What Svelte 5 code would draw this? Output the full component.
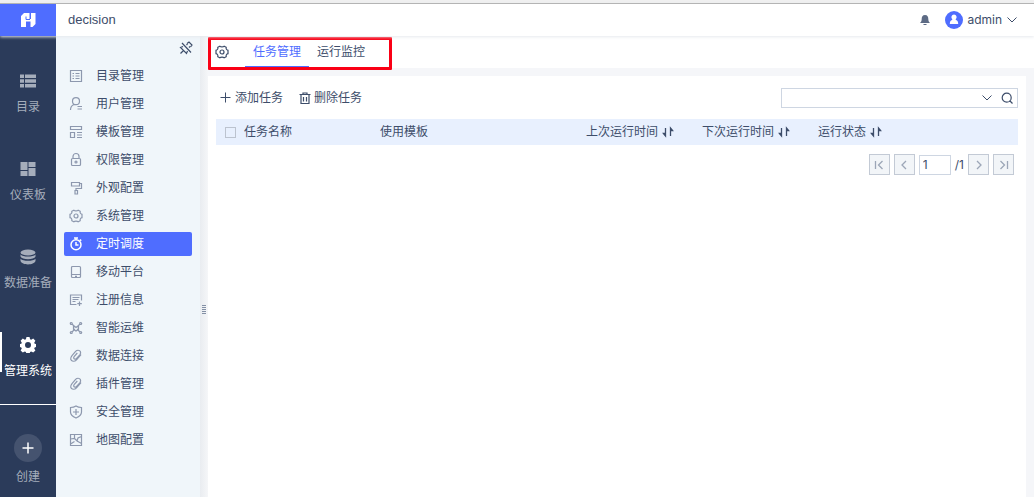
<script lang="ts">
  let activeModule = $state('管理系统');
  let activeMenu = $state('定时调度');
  let activeTab = $state('任务管理');
  let keyword = $state('');
  let page = $state('1');

  const gear =
    'M5.8 2.2 C6.6 3.2 9.400 3.2 10.200 2.2 L12.200 3.300 C11.800 4.800 12.600 6 14 6.300 V9.700 C12.600 10 11.800 11.200 12.200 12.700 L10.200 13.800 C9.400 12.800 6.600 12.800 5.800 13.800 L3.800 12.700 C4.200 11.200 3.400 10 2 9.700 V6.300 C3.400 6 4.200 4.800 3.800 3.300z M10 8a2 2 0 1 1-4 0a2 2 0 1 1 4 0';
  const clip =
    'M13 6.5 L8.5 11.8 C6.5 14 3.2 13.6 2.7 11.2 C2.4 9.8 3 8.8 4 7.6 L7.6 3.4 C9 1.8 11.4 1.9 12.3 3.4 C13 4.6 12.6 5.8 11.8 6.8 L8.6 10.4 C7.6 11.5 6 11.3 5.7 10.2 C5.5 9.4 5.8 8.9 6.3 8.3 L9.3 5';

  const modules = [
    { name: '目录', icon: 'M0 1.5h4v3.5h-4z M5 1.5h11v3.5h-11z M0 6.3h4v3.5h-4z M5 6.3h11v3.5h-11z M0 11.1h4v3.5h-4z M5 11.1h11v3.5h-11z' },
    { name: '仪表板', icon: 'M.5 1h7v8h-7z M8.5 1h7v5h-7z M.5 10h7v5h-7z M8.5 7h7v8h-7z' },
    { name: '数据准备', icon: 'M.5 3.5 A7.5 3 0 0 1 15.5 3.5 A7.5 3 0 0 1 .5 3.5z M.5 5.5 C3 8.2 13 8.2 15.5 5.5 V7.5 C14 11 2 11 .5 7.5z M.5 9.8 C3 12.5 13 12.5 15.5 9.8 V12 C14 16.5 2 16.5 .5 12z' },
    { name: '管理系统', icon: 'M6.5 0h3l.6 2.200 1.100.5 2-1.200 2.200 2.200-1.200 2 .5 1 2.200.6v2.400l-2.200.7-.5 1 1.200 2-2.200 2.200-2-1.200-1.100.5-.6 2.200h-3l-.6-2.200-1.100-.5-2 1.200-2.200-2.200 1.200-2-.5-1-2.200-.7v-2.400l2.200-.6.5-1-1.200-2 2.200-2.200 2 1.200 1.100-.5z M8 5a3 3 0 1 0 0 6a3 3 0 1 0 0-6z' },
  ];

  const menus = [
    { name: '目录管理', icon: 'M2.5 2.5h11v11h-11z M4.5 5.5h1.500 M7.5 5.5h4 M4.5 8h1.500 M7.5 8h4 M4.5 10.5h1.500 M7.5 10.5h4' },
    { name: '用户管理', icon: 'M11.5 5.2a3.500 3.500 0 1 1-7 0a3.500 3.500 0 1 1 7 0 M6 8.500 C3.5 9.500 2.500 11.500 2.500 14 M9.500 10.500h4.500 M9.500 13h4.500' },
    { name: '模板管理', icon: 'M2.500 2.500h11v3h-11z M2.500 8.500h4v5h-4z M9 8.500h5 M9 11h5 M9 13.500h5' },
    { name: '权限管理', icon: 'M5 7V4.500a3 3 0 0 1 6 0V7 M4.500 6.500h7a1 1 0 0 1 1 1v5a1 1 0 0 1-1 1h-7a1 1 0 0 1-1-1v-5a1 1 0 0 1 1-1z M9 10a1 1 0 1 1-2 0a1 1 0 1 1 2 0' },
    { name: '外观配置', icon: 'M3.500 2.500h8v3.500h-8z M11.500 3.500h2v5h-5.500v2 M7 10.500h2.500v3.500h-2.500z' },
    { name: '系统管理', icon: gear },
    { name: '定时调度', icon: 'M13 8.800a5 5 0 1 1-10 0a5 5 0 1 1 10 0 M6 2h4 M8 2v2 M8 6v3h2.500 M12 3.500l1.200 1.200' },
    { name: '移动平台', icon: 'M4.500 2.500h7a1 1 0 0 1 1 1v9a1 1 0 0 1-1 1h-7a1 1 0 0 1-1-1v-9a1 1 0 0 1 1-1z M3.500 10.500h9 M7 12.300h2' },
    { name: '注册信息', icon: 'M8.500 12.500h-6v-9.500h11v5.500 M4.500 5.500h7 M4.500 7.500h6 M4.500 9.500h3 M11.500 9.500v4.500 M9.300 11.700h4.500' },
    { name: '智能运维', icon: 'M4 4l3 3 M12 4l-3 3 M4 12l3-3 M12 12l-3-3 M4.300 3.500a1 1 0 1 1-2 0a1 1 0 1 1 2 0 M13.700 3.500a1 1 0 1 1-2 0a1 1 0 1 1 2 0 M4.300 12.500a1 1 0 1 1-2 0a1 1 0 1 1 2 0 M13.700 12.500a1 1 0 1 1-2 0a1 1 0 1 1 2 0 M5.500 5.500l2.500 2 2.500-2v4l-2.500 1.500-2.500-1.500z' },
    { name: '数据连接', icon: clip },
    { name: '插件管理', icon: clip },
    { name: '安全管理', icon: 'M8 2 C10 3.300 12 3.500 13.500 3.500 V8 C13.500 11 10.500 13 8 14 C5.500 13 2.500 11 2.500 8 V3.500 C4 3.500 6 3.300 8 2z M8 5v6 M5 8h6' },
    { name: '地图配置', icon: 'M2.500 2.500h11v11h-11z M2.500 7l4-.5 2.500 2.500 1-3 3.500-1.500 M6.500 6.500v-4 M2.500 12l4-2.500 M9 9l4.500 2.500' },
  ];

  const tabs = ['任务管理', '运行监控'];
</script>

{#snippet line(d: string)}
  <svg class="line-icon" viewBox="0 0 16 16" aria-hidden="true"><path {d} /></svg>
{/snippet}

{#snippet sortable(label: string)}
  <button class="sort">
    {label}
    <svg viewBox="0 0 12 12" aria-hidden="true">
      <path d="M3.5 2v8 M1.5 7.5l2 2.5v-2.5z M8.5 10v-8 M10.5 4.5l-2-2.5v2.5z" />
    </svg>
  </button>
{/snippet}

<div class="app">
  <header>
    <a class="logo" href="#home" aria-label="decision">
      <svg viewBox="0 0 16 16" aria-hidden="true">
        <path d="M4 1 H9.500 V7 H11 V4.500 H10.500 V1 H15.500 V12 L12.500 15 H10.500 V9.500 H6 V15 H1 V4z" />
        <path class="cut" d="M6 4.500v3h4 M10.500 1v4" />
      </svg>
    </a>
    <span class="title">decision</span>
    <div class="user">
      <button class="bell" aria-label="消息">
        <svg viewBox="0 0 12 12" aria-hidden="true"><path d="M6 1 C8.500 1 9.300 3 9.300 5 C9.300 7 10 8 11 9 H1 C2 8 2.700 7 2.700 5 C2.700 3 3.500 1 6 1z M4.500 10h3v1h-3z" /></svg>
      </button>
      <button class="account">
        <svg class="avatar" viewBox="0 0 18 18" aria-hidden="true">
          <circle cx="9" cy="9" r="9" />
          <path d="M9 3.500a2.700 2.700 0 0 1 1.600 4.800 L11 9 C12.500 9.500 13.200 10.500 13.200 13 H4.800 C4.800 10.500 5.500 9.500 7 9 L7.400 8.300 A2.700 2.700 0 0 1 9 3.500z" />
        </svg>
        <span>admin</span>
        <svg class="chevron" viewBox="0 0 12 12" aria-hidden="true"><path d="M1.500 3.500l4.500 4.500 4.500-4.500" /></svg>
      </button>
    </div>
  </header>

  <div class="body">
    <nav class="rail">
      {#each modules as item}
        <button class="module" class:active={activeModule === item.name} onclick={() => (activeModule = item.name)}>
          <svg viewBox="0 0 16 16" aria-hidden="true"><path fill-rule="evenodd" d={item.icon} /></svg>
          <span>{item.name}</span>
        </button>
      {/each}
      <button class="create">
        <span class="plus">
          <svg viewBox="0 0 12 12" aria-hidden="true"><path d="M6 .5v11 M.5 6h11" /></svg>
        </span>
        <span>创建</span>
      </button>
    </nav>

    <aside>
      <button class="pin" aria-label="固定">
        {@render line('M4 3l9 9.500 M9 3.500l2-1.500 3 3-1.500 2 M8.500 5l1-1 M11 7.500l1-1 M5 6.500l-2.500 1 6 6 1-2.500 M5.500 10.500l-3 3')}
      </button>
      <ul>
        {#each menus as item}
          <li>
            <button class:active={activeMenu === item.name} onclick={() => (activeMenu = item.name)}>
              {@render line(item.icon)}
              <span>{item.name}</span>
            </button>
          </li>
        {/each}
      </ul>
    </aside>

    <div class="splitter"><i></i></div>

    <main>
      <div class="tabs">
        <button class="setting" aria-label="设置">{@render line(gear)}</button>
        {#each tabs as tab}
          <button class="tab" class:active={activeTab === tab} onclick={() => (activeTab = tab)}>{tab}</button>
        {/each}
        <div class="mark"></div>
      </div>

      <section>
        <div class="toolbar">
          <button>
            <svg viewBox="0 0 12 12" aria-hidden="true"><path d="M5.5 .5v10 M.5 5.5h10" /></svg>
            添加任务
          </button>
          <button>
            <svg class="trash" viewBox="0 0 12 12" aria-hidden="true"><path d="M.5 2.500h11 M4 2.500v-1.500h4v1.500 M2 2.500v9h8v-9 M4.500 5v4.500 M7.500 5v4.500" /></svg>
            删除任务
          </button>
          <div class="search">
            <input type="text" aria-label="搜索任务" bind:value={keyword} />
            <svg class="chevron" viewBox="0 0 12 12" aria-hidden="true"><path d="M1.500 3.500l4.500 4.500 4.500-4.500" /></svg>
            <button aria-label="搜索">
              <svg viewBox="0 0 12 12" aria-hidden="true"><path d="M10.200 5.700a4.500 4.500 0 1 1-9 0a4.500 4.500 0 1 1 9 0 M8.500 8.500l3 3" /></svg>
            </button>
          </div>
        </div>

        <table>
          <thead>
            <tr>
              <th class="check"><input type="checkbox" aria-label="全选" /></th>
              <th class="name">任务名称</th>
              <th>使用模板</th>
              <th class="time">{@render sortable('上次运行时间')}</th>
              <th class="time">{@render sortable('下次运行时间')}</th>
              <th class="status">{@render sortable('运行状态')}</th>
            </tr>
          </thead>
        </table>

        <div class="pager">
          <button aria-label="首页"><svg viewBox="0 0 12 12"><path d="M2.500 2v8 M9.500 2l-4 4 4 4" /></svg></button>
          <button aria-label="上一页"><svg viewBox="0 0 12 12"><path d="M8 2l-4 4 4 4" /></svg></button>
          <input type="text" aria-label="页码" bind:value={page} />
          <span>/1</span>
          <button aria-label="下一页"><svg viewBox="0 0 12 12"><path d="M4 2l4 4-4 4" /></svg></button>
          <button aria-label="末页"><svg viewBox="0 0 12 12"><path d="M2.500 2l4 4-4 4 M9.500 2v8" /></svg></button>
        </div>
      </section>
    </main>
  </div>
</div>

<style>
  .app {
    display: flex;
    flex-direction: column;
    box-sizing: border-box;
    min-height: 100vh;
    border-top: 3px solid #f0f0f0;
    font-family: Inter, 'Noto Sans CJK SC', sans-serif;
    font-size: 12px;
    line-height: 16px;
    color: #3d4d6a;
    background: #f5f6f9;
  }

  button {
    display: flex;
    align-items: center;
    padding: 0;
    border: none;
    background: none;
    color: inherit;
    font: inherit;
    cursor: pointer;
  }

  input {
    box-sizing: border-box;
    margin: 0;
    font: inherit;
    color: inherit;
  }

  svg {
    display: block;
    flex: none;
    width: 12px;
    height: 12px;
    fill: none;
    stroke: currentColor;
  }

  .line-icon {
    width: 16px;
    height: 16px;
    stroke-width: 1.2;
  }

  header {
    display: flex;
    align-items: center;
    height: 32px;
    border-top: 1px solid #b4b4b4;
    background: #fff;
    z-index: 1;
    box-shadow: 0 1px 3px #e6e9ee;
  }

  .logo {
    display: flex;
    align-items: center;
    justify-content: center;
    width: 56px;
    height: 32px;
    background: #4f6dff;
    color: #fff;
  }

  .logo svg {
    width: 16px;
    height: 16px;
    fill: currentColor;
    stroke: none;
  }

  .logo .cut {
    fill: none;
    stroke: #4f6dff;
  }

  .title {
    margin-left: 12px;
    font-family: 'Liberation Sans', sans-serif;
    font-size: 13px;
  }

  .user {
    display: flex;
    align-items: center;
    gap: 14px;
    margin-left: auto;
    padding-right: 16px;
  }

  .bell svg {
    fill: #5d6b85;
    stroke: none;
  }

  .account {
    gap: 4px;
  }

  .avatar {
    width: 18px;
    height: 18px;
    fill: #fff;
    stroke: none;
  }

  .avatar circle {
    fill: #4f6dff;
  }

  .body {
    display: flex;
    flex: 1;
  }

  .rail {
    width: 56px;
    flex: none;
    background: #2b3b5a;
    color: #a5adbb;
  }

  .module,
  .create {
    flex-direction: column;
    box-sizing: border-box;
    width: 100%;
    white-space: nowrap;
  }

  .module {
    position: relative;
    height: 88px;
    padding-top: 37px;
    gap: 10px;
  }

  .module svg {
    width: 16px;
    height: 16px;
    fill: currentColor;
    stroke: none;
  }

  .module.active {
    color: #fff;
  }

  .module.active::before {
    content: '';
    position: absolute;
    left: 0;
    top: 32px;
    width: 2px;
    height: 40px;
    background: #fff;
  }

  .create {
    margin-top: 16px;
    padding-top: 29px;
    gap: 7px;
    border-top: 1px solid #fff;
  }

  .plus {
    display: flex;
    align-items: center;
    justify-content: center;
    width: 28px;
    height: 28px;
    border-radius: 50%;
    background: #45536f;
    color: #fff;
  }

  .plus svg {
    stroke-width: 1.5;
  }

  aside {
    width: 144px;
    flex: none;
    background: #f0f6fa;
  }

  .pin {
    margin: 4px 6px 0 auto;
  }

  ul {
    display: flex;
    flex-direction: column;
    gap: 4px;
    margin: 8px;
    padding: 0;
    list-style: none;
  }

  li button {
    width: 100%;
    height: 24px;
    padding-left: 4px;
    gap: 12px;
    border-radius: 2px;
  }

  li .line-icon {
    color: #8d98ae;
  }

  li .active {
    background: #4f6dff;
    color: #fff;
  }

  li .active .line-icon {
    color: #fff;
    stroke-width: 1.5;
  }

  .splitter {
    display: flex;
    align-items: center;
    justify-content: center;
    width: 8px;
    flex: none;
    background: linear-gradient(to right, #e9ecf0, #f5f6f8);
  }

  .splitter i {
    width: 4px;
    height: 10px;
    margin-top: 86px;
    background: repeating-linear-gradient(#8490a5 0 1px, transparent 1px 2px);
  }

  main {
    display: flex;
    flex-direction: column;
    flex: 1;
    min-width: 0;
  }

  .tabs {
    position: relative;
    display: flex;
    height: 32px;
    background: #fff;
  }

  .setting {
    padding: 0 15px 0 6px;
  }

  .tab {
    padding: 0 8px;
    border-bottom: 2px solid transparent;
    border-top: 2px solid transparent;
  }

  .tab.active {
    border-bottom-color: #4f6dff;
    color: #4f6dff;
  }

  .mark {
    position: absolute;
    left: 0;
    top: 1px;
    box-sizing: border-box;
    width: 184px;
    height: 33px;
    border: 3px solid #fa0015;
    border-radius: 1px;
    pointer-events: none;
  }

  section {
    flex: 1;
    margin: 8px 8px 0 0;
    padding: 12px 8px;
    background: #fff;
  }

  .toolbar {
    display: flex;
    align-items: center;
    height: 20px;
    gap: 16px;
    padding-left: 4px;
  }

  .toolbar button {
    gap: 3px;
  }

  .toolbar .trash {
    stroke-width: 1.2;
  }

  .search {
    display: flex;
    align-items: center;
    box-sizing: border-box;
    width: 237px;
    height: 20px;
    margin-left: auto;
    padding-right: 4px;
    gap: 8px;
    border: 1px solid #ced6e2;
  }

  .search input {
    flex: 1;
    min-width: 0;
    height: 18px;
    border: none;
    outline: none;
    background: none;
  }

  .search button svg {
    stroke-width: 1.2;
  }

  table {
    width: 100%;
    margin-top: 11px;
    border-collapse: collapse;
    table-layout: fixed;
    background: #e8f0fe;
  }

  th {
    height: 26px;
    padding: 0 4px;
    font-weight: 400;
    text-align: left;
    white-space: nowrap;
  }

  .check {
    width: 16px;
  }

  .check input {
    display: block;
    appearance: none;
    width: 11px;
    height: 11px;
    margin-left: 5px;
    border: 1px solid #bcc3cf;
    background: transparent;
  }

  .name {
    width: 128px;
  }

  .time {
    width: 108px;
  }

  .status {
    width: 196px;
  }

  .sort {
    gap: 4px;
  }

  .sort svg {
    fill: currentColor;
    stroke-width: 1.3;
  }

  .pager {
    display: flex;
    align-items: center;
    justify-content: flex-end;
    gap: 4px;
    margin-top: 9px;
    padding-right: 4px;
  }

  .pager button {
    justify-content: center;
    box-sizing: border-box;
    width: 21px;
    height: 21px;
    border: 1px solid #c3cad5;
    background: #f2f5f8;
    color: #9ca6b7;
  }

  .pager svg {
    stroke-width: 1.3;
  }

  .pager input {
    width: 32px;
    height: 20px;
    padding: 0 3px;
    border: 1px solid #ced6e2;
    background: #fff;
  }
</style>
